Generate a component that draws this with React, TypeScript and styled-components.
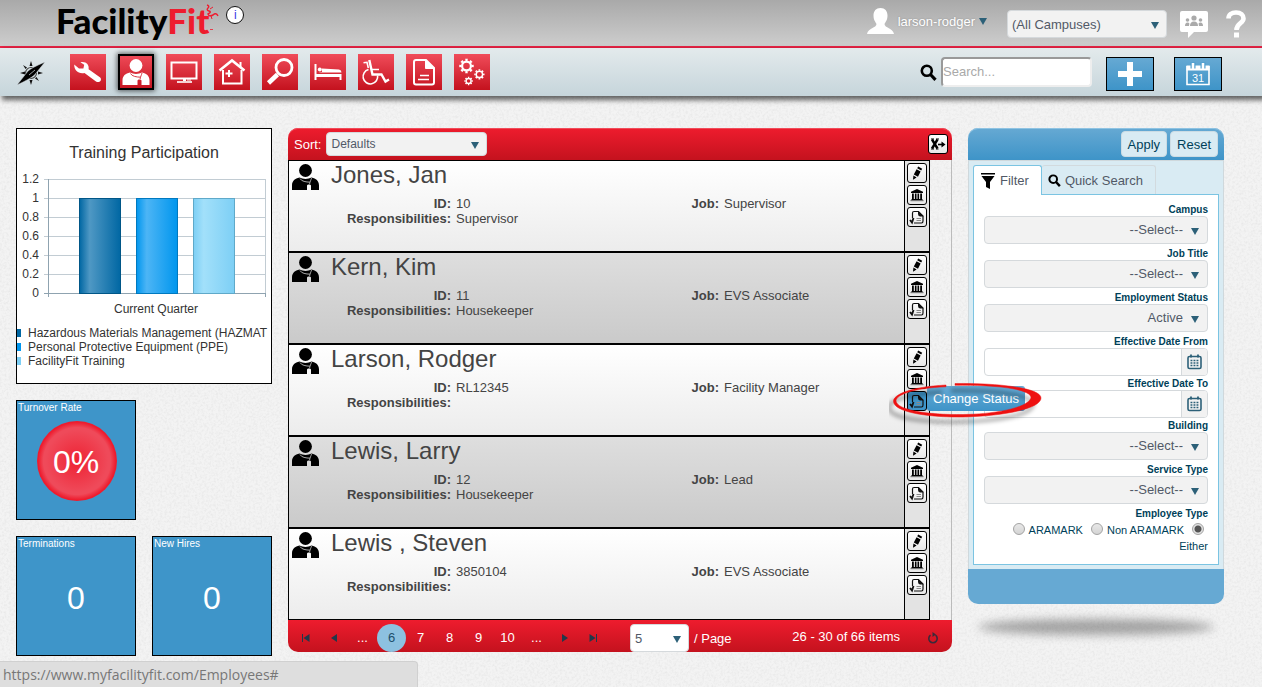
import React from "react";
import styled, { createGlobalStyle, css } from "styled-components";

const GlobalStyle = createGlobalStyle`
  *, *::before, *::after { box-sizing: border-box; }
  html { height: 100%; }
  body {
    margin: 0;
    min-height: 100%;
    background: #f3f3f3;
    color: #444;
    font: 13px/15px "Liberation Sans", Arial, sans-serif;
    overflow-x: hidden;
  }
  button, input, select { font: inherit; color: inherit; margin: 0; }
  button { padding: 0; cursor: pointer; }
  a { color: inherit; text-decoration: none; }
  svg { display: block; flex: none; }
`;

const blueFade = "linear-gradient(#66a9d3, #3e94c8)";
const redFade = "linear-gradient(#ee1c2e, #c4121e)";

/* ---------- page frame ---------- */

const Page = styled.div`
  min-height: 100vh;
  overflow: hidden;
  position: relative;
  isolation: isolate;
`;

const Texture = styled.svg`
  position: absolute;
  inset: 0;
  width: 100%;
  height: 100%;
  z-index: -1;
`;

const TopBar = styled.header`
  display: flex;
  align-items: center;
  height: 48px;
  padding: 2px 16px 0 56px;
  background: linear-gradient(#a9a9a9, #cdcdcd);
  border-bottom: 2px solid #ee2346;
`;

const Logo = styled.a`
  display: flex;
  font: 900 35px/40px Lato, sans-serif;
  color: #000;
  margin-bottom: 8px;
`;

const LogoAccent = styled.span`
  color: #ee1c2e;
`;

const Squiggle = styled.svg`
  margin: 4px 0 0 -4px;
`;

const InfoButton = styled.button`
  width: 18px;
  height: 18px;
  margin: 0 0 18px 7px;
  border: 1px solid #111;
  border-radius: 50%;
  background: #fff;
  color: #3a3ae6;
  font-size: 12px;
  line-height: 16px;
`;

const TopRight = styled.div`
  display: flex;
  align-items: center;
  margin-left: auto;
`;

const Account = styled.button`
  display: flex;
  align-items: center;
  gap: 4px;
  margin: 0 20px 6px 0;
  border: 0;
  background: none;
  color: #fff;
  text-shadow: 0 0 2px rgba(0, 0, 0, 0.25);
`;

const IconButton = styled.button<{ $gap: number }>`
  margin-left: ${(p) => p.$gap}px;
  border: 0;
  background: none;
`;

const Caret = styled.span`
  border: 4px solid transparent;
  border-top: 7px solid #2c6078;
  border-bottom: 0;
`;

const ToolBar = styled.nav`
  position: relative;
  display: flex;
  align-items: center;
  height: 48px;
  padding: 0 40px 0 16px;
  background: linear-gradient(#e3eaec, #c6d5db);
  box-shadow: 3px 3px 5px 1px rgba(0, 0, 0, 0.6);
`;

const ToolList = styled.div`
  display: flex;
  gap: 12px;
  margin: 0 auto 0 24px;
`;

const Tool = styled.a<{ $active?: boolean }>`
  width: 36px;
  height: 36px;
  background: linear-gradient(#f04c5a, #c4121e);
  ${(p) =>
    p.$active &&
    css`
      box-shadow: inset 0 0 0 2px #000, 0 0 5px 1px rgba(0, 0, 0, 0.6);
    `}
`;

const SearchBox = styled.label`
  display: flex;
  align-items: center;
  gap: 4px;
`;

const SearchInput = styled.input`
  width: 151px;
  height: 30px;
  padding: 0 0 2px;
  border: 2px solid #eee;
  border-top-color: #999;
  border-left-color: #999;
  border-radius: 4px;
  background: #fff;
  &::placeholder { color: #a9a9a9; }
`;

const BlueButton = styled.button<{ $gap: number }>`
  display: grid;
  place-items: center;
  width: 48px;
  height: 34px;
  margin: 3px 0 0 ${(p) => p.$gap}px;
  border: 1px solid #000;
  background: ${blueFade};
`;

const Columns = styled.main`
  display: grid;
  grid-template-columns: 256px minmax(0, 1fr) 256px;
  align-items: start;
  gap: 16px;
  padding: 32px 38px 31px 16px;
`;

/* ---------- select ---------- */

const SelectWrap = styled.span<{ $w?: number; $caret: number }>`
  display: block;
  position: relative;
  width: ${(p) => (p.$w ? p.$w + "px" : "100%")};
  &::after {
    content: "";
    position: absolute;
    right: ${(p) => p.$caret}px;
    top: 50%;
    margin-top: -2px;
    border: 4px solid transparent;
    border-top: 7px solid #2c6078;
    border-bottom: 0;
    pointer-events: none;
  }
`;

const SelectBase = styled.select<{ $h: number; $right?: boolean; $size: number; $plain?: boolean }>`
  display: block;
  appearance: none;
  width: 100%;
  height: ${(p) => p.$h}px;
  padding: 0 24px 0 4px;
  border: 1px solid #d5d9dc;
  border-radius: 4px;
  background: ${(p) => (p.$plain ? "#fff" : "#f2f2f2")};
  color: #515967;
  font-size: ${(p) => p.$size}px;
  text-align: ${(p) => (p.$right ? "right" : "left")};
  text-align-last: ${(p) => (p.$right ? "right" : "left")};
`;

type SelectProps = {
  id?: string;
  label?: string;
  value: string;
  h: number;
  w?: number;
  size?: number;
  right?: boolean;
  plain?: boolean;
};

const Select = ({ id, label, value, h, w, size = 13, right, plain }: SelectProps) => (
  <SelectWrap $w={w} $caret={right ? 9 : 8}>
    <SelectBase id={id} aria-label={label} $h={h} $size={size} $right={right} $plain={plain}>
      <option>{value}</option>
    </SelectBase>
  </SelectWrap>
);

/* ---------- left column ---------- */

const Dashboard = styled.section`
  display: grid;
  grid-template-columns: 1fr 1fr;
  gap: 16px;
`;

const ChartCard = styled.div`
  grid-column: 1 / -1;
  border: 1px solid #000;
  background: #fff;
`;

const Tile = styled.div`
  display: flex;
  flex-direction: column;
  height: 120px;
  border: 1px solid #000;
  background: #3e95c9;
  color: #fff;
`;

const TileGap = styled.div``;

const TileTitle = styled.h2`
  margin: 0;
  padding: 1px;
  font-size: 10px;
  line-height: 12px;
  font-weight: 400;
`;

const TileValue = styled.div<{ $round?: boolean }>`
  display: grid;
  place-items: center;
  align-self: center;
  width: 80px;
  height: 80px;
  margin: 6px 0 0 2px;
  padding: 2px 2px 0 0;
  border-radius: 50%;
  font-size: 32px;
  line-height: 36px;
  ${(p) =>
    p.$round &&
    css`
      background: radial-gradient(circle closest-side, #ee2233 0%, #ef4a5a 78%, #ef4a5a 84%, #ee1c2e 97%);
    `}
`;

/* ---------- employee list ---------- */

const ListPanel = styled.section`
  display: flex;
  flex-direction: column;
`;

const ListHeader = styled.div`
  display: flex;
  align-items: center;
  gap: 5px;
  height: 32px;
  padding: 0 4px 0 6px;
  border-radius: 10px 10px 0 0;
  background: ${redFade};
  box-shadow: inset 0 1px 0 #f04c5a;
  color: #fff;
`;

const Push = styled.span`
  margin-left: auto;
`;

const Rows = styled.ul`
  margin: 0;
  padding: 0 21px 0 0;
  list-style: none;
  border-right: 1px solid #bbb;
`;

const Row = styled.li`
  display: flex;
  height: 92px;
  border: 1px solid #000;
  background: linear-gradient(#fff, #ececec);
  &:nth-child(even) { background: linear-gradient(#dedede, #cacaca); }
`;

const RowIcon = styled.div`
  width: 42px;
  padding: 3px 0 0 3px;
`;

const RowBody = styled.div`
  flex: 1;
  min-width: 0;
`;

const RowName = styled.h3`
  margin: 0 0 7px;
  font-size: 24px;
  line-height: 28px;
  font-weight: 400;
`;

const Facts = styled.dl`
  display: grid;
  grid-template-columns: 120fr 148fr 120fr 185fr;
  margin: 0;
`;

const Term = styled.dt`
  text-align: right;
  font-weight: 700;
`;

const Detail = styled.dd`
  margin: 0;
  padding-left: 5px;
`;

const Actions = styled.div`
  display: flex;
  flex-direction: column;
  gap: 2px;
  width: 25px;
  padding: 2px 0 0 2px;
  border-left: 1px solid #000;
  background: #e3e3e3;
`;

const ActionSlot = styled.div`
  position: relative;
  width: 20px;
`;

const ActionButton = styled.button<{ $on?: boolean }>`
  display: grid;
  place-items: center;
  width: 20px;
  height: 20px;
  border: 1px solid #000;
  border-radius: 3px;
  background: ${(p) => (p.$on ? "#3e94c8" : "linear-gradient(#fff, #e8e8e8)")};
`;

const Tooltip = styled.span`
  position: absolute;
  left: 100%;
  top: -5px;
  z-index: 5;
  padding: 5px 6px;
  border-radius: 3px;
  background: ${blueFade};
  color: #fff;
  white-space: nowrap;
`;

const Circle = styled.svg`
  position: absolute;
  left: -18px;
  top: -13px;
  z-index: 6;
  pointer-events: none;
`;

const Pager = styled.div`
  display: flex;
  align-items: center;
  height: 32px;
  padding-left: 4px;
  border-radius: 0 0 10px 10px;
  background: ${redFade};
  color: #fff;
`;

const PagerButton = styled.button<{ $current?: boolean; $arrow?: boolean }>`
  display: grid;
  place-items: center;
  width: ${(p) => (p.$arrow ? 28 : 29)}px;
  height: 28px;
  margin-top: 3px;
  border: 0;
  border-radius: 50%;
  background: ${(p) => (p.$current ? "#8dc1e0" : "none")};
  color: ${(p) => (p.$current ? "#1d4f6b" : "#fff")};
`;

const PageSize = styled.label`
  display: flex;
  align-items: center;
  gap: 5px;
  margin: 4px 0 0 23px;
`;

const PageCount = styled.span`
  margin: 0 14px 0 auto;
`;

const RefreshButton = styled.button`
  display: grid;
  place-items: center;
  width: 38px;
  height: 32px;
  padding-top: 3px;
  border: 0;
  background: none;
`;

/* ---------- filter panel ---------- */

const FilterPanel = styled.form`
  position: relative;
`;

const FilterHeader = styled.div`
  display: flex;
  justify-content: flex-end;
  gap: 3px;
  height: 32px;
  padding: 3px 6px;
  border-radius: 10px 10px 0 0;
  background: ${blueFade};
  box-shadow: inset 0 1px 0 #8fc3e2;
`;

const PaleButton = styled.button`
  height: 26px;
  padding: 0 6px;
  border: 1px solid #ccdce4;
  border-radius: 4px;
  background: #d9ebf3;
  color: #003f59;
`;

const FilterBody = styled.div`
  padding: 4px;
  border: 1px solid #cfd8dc;
  border-bottom: 0;
  background: #d9ebf3;
`;

const Tabs = styled.div`
  display: flex;
  align-items: flex-start;
  height: 29px;
`;

const Tab = styled.button<{ $on?: boolean }>`
  display: flex;
  align-items: center;
  height: ${(p) => (p.$on ? 30 : 29)}px;
  gap: 4px;
  position: relative;
  padding: 0 12px 0 6px;
  border: 1px solid ${(p) => (p.$on ? "#7bc4e2" : "#d2dade")};
  border-bottom: 0;
  border-left-width: ${(p) => (p.$on ? "1px" : "0")};
  border-radius: 3px 3px 0 0;
  background: ${(p) => (p.$on ? "#fff" : "none")};
  color: #515967;
`;

const Fields = styled.div`
  padding: 9px 10px 10px;
  border: 1px solid #7bc4e2;
  background: #fff;
  color: #003f59;
  font-size: 10px;
  line-height: 12px;
`;

const Field = styled.div<{ $after: number }>`
  margin-bottom: ${(p) => p.$after}px;
`;

const FieldLabel = styled.label`
  display: block;
  text-align: right;
  font-weight: 700;
`;

const DateBox = styled.div`
  display: flex;
  height: 28px;
  border: 1px solid #d5d9dc;
  border-radius: 4px;
  background: #fff;
  overflow: hidden;
`;

const DateInput = styled.input`
  flex: 1;
  min-width: 0;
  border: 0;
  padding: 0 6px;
  background: none;
  font-size: 13px;
`;

const DateButton = styled.button`
  display: grid;
  place-items: center;
  width: 26px;
  border: 0;
  border-left: 1px solid #d5d9dc;
  background: #f2f2f2;
`;

const RadioSet = styled.fieldset`
  margin: 0;
  padding: 0;
  border: 0;
  min-width: 0;
  text-align: right;
  font-size: 11px;
  line-height: 16px;
`;

const RadioLegend = styled.legend`
  width: 100%;
  padding: 0;
  font-size: 10px;
  line-height: 12px;
  font-weight: 700;
`;

const Radio = styled.input`
  appearance: none;
  width: 12px;
  height: 12px;
  margin: 3px 4px 0 8px;
  vertical-align: -1px;
  border: 1px solid #a3a3a3;
  border-radius: 50%;
  background: linear-gradient(#e8e8e8, #d4d4d4);
  &:checked {
    background: radial-gradient(circle, #555 0 3px, #e2e2e2 4px);
  }
`;

const FilterFooter = styled.div`
  height: 35px;
  border-radius: 0 0 10px 10px;
  background: #66a9d3;
`;

const FloorShadow = styled.div`
  height: 16px;
  margin: 15px 10px 0;
  border-radius: 50%;
  background: rgba(0, 0, 0, 0.32);
  filter: blur(5px);
`;

const StatusBar = styled.div`
  position: fixed;
  left: 0;
  bottom: 0;
  z-index: 10;
  width: 33.1%;
  height: 26px;
  padding: 4px 3px;
  border-top: 1px solid #d0d0d0;
  border-right: 1px solid #d0d0d0;
  border-top-right-radius: 4px;
  background: #dedede;
  color: #777;
  font: 14px/18px "Open Sans", sans-serif;
  white-space: nowrap;
`;

/* ---------- icons ---------- */

const PersonShape = ({ line }: { line: string }) => (
  <>
    <circle cx="13.5" cy="6.5" r="6.4" />
    <path d="M0 26V21.5C0 17 3 14.5 7.5 13.6C11 15.4 16 15.4 19.5 13.6C24 14.5 27 17 27 21.5V26H19V21.5C19 20 15 20 15 21.5V26Z" />
    <path d="M8 14.5C9.5 17.5 14 18 18 18.2M19.5 14C19 16 18 17.5 17.6 20" fill="none" stroke={line} strokeWidth="0.9" />
  </>
);

const PersonIcon = () => (
  <svg width="27" height="26" viewBox="0 0 27 26" fill="#000">
    <PersonShape line="#bbb" />
  </svg>
);

const Gear = ({ x, y, r, n, w }: { x: number; y: number; r: number; n: number; w: number }) => (
  <>
    <circle cx={x} cy={y} r={r} fill="none" stroke="#fff" strokeWidth={w} />
    <circle cx={x} cy={y} r={r + w * 0.8} fill="none" stroke="#fff" strokeWidth={w} pathLength={n * 2} strokeDasharray="1 1" strokeDashoffset="0.5" />
  </>
);

const toolIcons: { name: string; art: React.ReactNode }[] = [
  {
    name: "Maintenance",
    art: <path fill="#fff" d="M4.2 10.5C4 16 8.5 20.4 14.5 19L26 27.6C29.4 29.4 32.4 26 30.2 23.4L18.6 15.2C19.4 10.4 15.8 7 10.4 8.2L14.2 10.8L13.4 14.4L9 14.6Z" />,
  },
  {
    name: "Employees",
    art: (
      <g fill="#fff" transform="translate(4.5 5)">
        <PersonShape line="#d42231" />
      </g>
    ),
  },
  {
    name: "Assets",
    art: (
      <g fill="none" stroke="#fff">
        <rect x="5.5" y="8.5" width="25" height="16" strokeWidth="2" />
        <path d="M17 26h3" strokeWidth="2" />
        <path d="M11 28h15" strokeWidth="1.6" />
        <path d="M21 26h4" strokeWidth="1" />
      </g>
    ),
  },
  {
    name: "Buildings",
    art: (
      <g fill="none" stroke="#fff" strokeWidth="2">
        <path d="M9 16V29.5H27.5V16" />
        <path d="M5.500 16.500L18 6.500L30.500 16.500" strokeWidth="2.600" />
        <path d="M26.500 8v5M15 16v7M11.500 19.500h7" strokeWidth="2" />
      </g>
    ),
  },
  {
    name: "Inspections",
    art: (
      <g fill="none" stroke="#fff">
        <circle cx="22" cy="13.500" r="8" strokeWidth="2.800" />
        <path d="M15.500 20.500L6.500 29" strokeWidth="4.500" />
      </g>
    ),
  },
  {
    name: "Beds",
    art: (
      <g fill="#fff">
        <path d="M4.500 10h2v10h25v6h-2v-3H6.500v3h-2z" />
        <circle cx="9.800" cy="15.500" r="2" />
        <path d="M12 14.500L29 15.500Q31.500 16 31.500 18.500H8.500Q9 18 12 18Z" />
      </g>
    ),
  },
  {
    name: "Patients",
    art: (
      <g fill="none" stroke="#fff" strokeWidth="1.600">
        <path d="M10.500 15.600A7.300 7.300 0 1 0 19.600 21.500" />
        <path d="M11.300 6L14.500 20.500H23.500L27.500 27.500L31 25.500" strokeWidth="2.400" />
        <path d="M5.500 8.800L9 8.300L10.300 14M14 15.500H21" />
      </g>
    ),
  },
  {
    name: "Documents",
    art: (
      <g fill="none" stroke="#fff" strokeWidth="2">
        <path d="M10 6H20L28 14V28.500Q28 30.500 26 30.500H10Q8 30.500 8 28.500V8Q8 6 10 6Z" />
        <path d="M19.500 5.500V14.500H28Z" fill="#fff" strokeWidth="1" />
        <path d="M14 21.500h9M12 25.500h11" strokeWidth="1.600" />
      </g>
    ),
  },
  {
    name: "Settings",
    art: (
      <>
        <Gear x={12.5} y={12} r={4.4} n={8} w={2.2} />
        <Gear x={25.4} y={20.4} r={3.2} n={8} w={1.5} />
        <Gear x={14.6} y={27} r={2.5} n={8} w={1.4} />
      </>
    ),
  },
];

const Compass = () => (
  <svg width="30" height="28" viewBox="0 0 30 28">
    <circle cx="15" cy="15" r="5.500" fill="none" stroke="#444" strokeWidth="1.200" />
    <path
      fill="#111"
      d="M15 3l1.500 5h-3zM15 27l1.500-5h-3zM4 15l5-1.500v3zM27 15l-5-1.500v3zM7 7l4 2.500-1.500 1.500zM23 23l-4-2.500 1.500-1.500z"
    />
    <path fill="#000" stroke="#dde5e8" strokeWidth="0.500" d="M1 27L12 13Q16 9.500 29 4L18.500 17Q14 21 1 27Z" />
    <path stroke="#dde5e8" strokeWidth="0.700" d="M13 17L19 12" />
  </svg>
);

const Magnifier = ({ size }: { size: number }) => (
  <svg width={size} height={size} viewBox="0 0 17 17" fill="none" stroke="#000">
    <circle cx="6.800" cy="6.800" r="5" strokeWidth="2.600" />
    <path d="M10.500 10.500L15.500 15.800" strokeWidth="3.200" />
  </svg>
);

const Pencil = () => (
  <svg width="14" height="14" viewBox="0 0 14 14">
    <path d="M8.200 0.500L12.200 2.800L11.200 4.500L7.200 2.300ZM6.600 3.200L10.600 5.500L8 10.800L3.800 8.500ZM3.400 9.400L6.600 11.400L3 13.800Z" />
  </svg>
);

const Bank = () => (
  <svg width="14" height="14" viewBox="0 0 14 14">
    <path d="M7 1L13 3.800V5H1V3.800ZM2 5.500h1.800V11H2zM4.900 5.500h1.600V11H4.900zM7.500 5.500h1.600V11H7.500zM10.200 5.500H12V11h-1.800zM1.500 11h11v1h-11z" />
    <path d="M0.500 12h13v1.200h-13z" fill="#777" />
  </svg>
);

const StatusDoc = () => (
  <svg width="16" height="16" viewBox="0 0 16 16" fill="none" stroke="#111">
    <path d="M3.500 9V4Q3.500 2.500 5 2.500H9.500L14 7V12Q14 14 12.500 14H5" strokeWidth="1.200" />
    <path d="M9 2L14.500 7.500H11Q9 7 9 5Z" fill="#111" stroke="none" />
    <path d="M7.500 9.500h4.500M7.500 11.500h4.500" stroke="#888" />
    <path d="M1 11L3 13.500L4.500 9" strokeWidth="1.900" />
  </svg>
);

const ExportIcon = () => (
  <svg width="16" height="14" viewBox="0 0 16 14">
    <path d="M2 2.500L7.500 11.500M7.500 2.500L2 11.500" stroke="#000" strokeWidth="2.400" />
    <path d="M1 2h3M6 2h3M1 12h3M6 12h2.500" stroke="#000" strokeWidth="1.200" />
    <path d="M8 7.500h5" stroke="#000" strokeWidth="1.600" />
    <path d="M11.500 4.500L15.500 7.500L11.500 10.500Z" />
  </svg>
);

const CalendarGrid = () => (
  <svg width="15" height="16" viewBox="0 0 15 16" fill="none" stroke="#2c6078">
    <rect x="1" y="2.500" width="13" height="12" rx="1.500" strokeWidth="1.600" />
    <path d="M4 0.500v3M11 0.500v3" strokeWidth="1.800" />
    <path d="M3.500 6.500h8.500M3.500 9h8.500M3.500 11.500h8.500" strokeWidth="1.700" strokeDasharray="1.900 1.100" />
  </svg>
);

const arrowPaths: Record<string, string> = {
  First: "M1 1h1v8H1zM8.500 1v8L2.500 5z",
  Previous: "M8 1v8L2 5z",
  Next: "M2 1v8l6-4z",
  Last: "M1.500 1v8l6-4zM8 1h1v8H8z",
};

const PagerArrow = ({ kind }: { kind: string }) => (
  <PagerButton type="button" $arrow aria-label={kind + " page"}>
    <svg width="10" height="10" viewBox="0 0 10 10" fill="#22384a">
      <path d={arrowPaths[kind]} />
    </svg>
  </PagerButton>
);

/* ---------- chart ---------- */

const bars = [
  { x: 62, dark: "#0067a3", light: "#4f98c4", edge: "#005687", label: "Hazardous Materials Management (HAZMAT" },
  { x: 119, dark: "#0096ee", light: "#4db5f5", edge: "#0079bf", label: "Personal Protective Equipment (PPE)" },
  { x: 176, dark: "#7dcff5", light: "#a2e0fa", edge: "#5fa9c9", label: "FacilityFit Training" },
];

const ticks = ["1.2", "1", "0.8", "0.6", "0.4", "0.2", "0"];

const Chart = () => (
  <svg width="100%" viewBox="0 0 254 254" fontSize="12" fill="#333" role="img" aria-label="Training Participation">
    <defs>
      {bars.map((b, i) => (
        <linearGradient key={i} id={"bar" + i}>
          <stop offset="0" stopColor={b.dark} />
          <stop offset="0.250" stopColor={b.light} />
          <stop offset="1" stopColor={b.dark} />
        </linearGradient>
      ))}
    </defs>
    <text x="127" y="29" fontSize="16" textAnchor="middle">Training Participation</text>
    {ticks.map((t, i) => (
      <g key={t}>
        <path d={`M27 ${50.5 + i * 19}H248.500`} stroke={i === 6 ? "#8fa3b0" : "#c2ccd3"} />
        <text x="22" y={54 + i * 19} textAnchor="end">{t}</text>
      </g>
    ))}
    <path d="M31.500 50V168M248.500 164V168" stroke="#8fa3b0" />
    <path d="M248.500 50V164" stroke="#c2ccd3" />
    {bars.map((b, i) => (
      <g key={b.x}>
        <rect x={b.x + 0.5} y="69.500" width="41" height="95" fill={`url(#bar${i})`} stroke={b.edge} />
        <rect x="0" y={200 + i * 14} width="4" height="8" fill={b.dark} />
        <text x="11" y={208 + i * 14}>{b.label}</text>
      </g>
    ))}
    <text x="139" y="184" textAnchor="middle">Current Quarter</text>
  </svg>
);

/* ---------- data ---------- */

const employees = [
  { name: "Jones, Jan", id: "10", job: "Supervisor", duty: "Supervisor" },
  { name: "Kern, Kim", id: "11", job: "EVS Associate", duty: "Housekeeper" },
  { name: "Larson, Rodger", id: "RL12345", job: "Facility Manager", duty: "", open: true },
  { name: "Lewis, Larry", id: "12", job: "Lead", duty: "Housekeeper" },
  { name: "Lewis , Steven", id: "3850104", job: "EVS Associate", duty: "" },
];

const filters = [
  { id: "campus", label: "Campus", value: "--Select--" },
  { id: "job-title", label: "Job Title", value: "--Select--" },
  { id: "employment", label: "Employment Status", value: "Active" },
  { id: "date-from", label: "Effective Date From" },
  { id: "date-to", label: "Effective Date To" },
  { id: "building", label: "Building", value: "--Select--" },
  { id: "service", label: "Service Type", value: "--Select--" },
];

const HandCircle = () => (
  <Circle width="160" height="54" viewBox="0 0 160 54">
    <defs>
      <filter id="soft" x="-10%" y="-30%" width="120%" height="160%">
        <feGaussianBlur stdDeviation="2" />
      </filter>
    </defs>
    <path
      d="M57 8C20 10 3 17 4 24C5 34 38 38.500 74 38C118 37 148 30 148 20C148 11 110 6 66 6.500"
      transform="translate(-4 6)"
      fill="none"
      stroke="#000"
      strokeOpacity="0.400"
      strokeWidth="3"
      filter="url(#soft)"
    />
    <path
      fill="#ee1111"
      stroke="#ee1111"
      strokeWidth="0.500"
      d="M57 7C20 9 4 17 4.500 23.500C5 34 38 39.500 74 39C118 38 152 30 152 20C152 10 110 5 66 5.500V7.300C108 6.800 140 11 142 19C142 28 112 36 74 36.500C38 37 8 32 7 23C7 17 24 10 57 8.800Z"
    />
  </Circle>
);

export default function App() {
  return (
    <Page>
      <GlobalStyle />
      <Texture aria-hidden="true">
        <filter id="grain">
          <feTurbulence type="fractalNoise" baseFrequency="0.430" numOctaves="3" seed="4" />
          <feColorMatrix values="0 0 0 0 0.500  0 0 0 0 0.500  0 0 0 0 0.500  0.400 0 0 0 -0.160" />
        </filter>
        <rect width="100%" height="100%" filter="url(#grain)" />
      </Texture>

      <TopBar>
        <Logo href="#" aria-label="FacilityFit">
          Facility<LogoAccent>Fit</LogoAccent>
          <Squiggle width="14" height="30" viewBox="0 0 14 30" fill="none" stroke="#ee1c2e">
            <path d="M2 1Q5 2 3 4T4 7T3 10Q4 13 8 11Q11 8 13 12" strokeWidth="1.400" />
            <path d="M5 5l3-2M6 12l1 3" />
            <path d="M5 25.500h3" strokeWidth="0.800" />
          </Squiggle>
        </Logo>
        <InfoButton type="button">i</InfoButton>
        <TopRight>
          <Account type="button">
            <svg width="27" height="26" viewBox="0 0 27 26" fill="#fff">
              <path d="M13.500 0C18 0 20.500 3 20.500 7.500C20.500 12 18.500 14 17.500 16C17.500 20 26 20 27 26H0C1 20 9.500 20 9.500 16C8.500 14 6.500 12 6.500 7.500C6.500 3 9 0 13.500 0Z" />
            </svg>
            larson-rodger
            <Caret />
          </Account>
          <Select label="Campus" value="(All Campuses)" h={28} w={160} />
          <IconButton type="button" $gap={13} aria-label="Community">
            <svg width="28" height="27" viewBox="0 0 28 27">
              <path fill="#fff" d="M2 0H26Q28 0 28 2V19Q28 21 26 21H14L8 27V21H2Q0 21 0 19V2Q0 0 2 0Z" />
              <g fill="#aaa">
                <circle cx="14" cy="7" r="2.600" />
                <circle cx="7.500" cy="9" r="1.800" />
                <circle cx="20.500" cy="9" r="1.800" />
                <path d="M10 15Q10 10.500 14 10.500T18 15ZM5 15Q5 11.500 7.500 11.500Q9 11.500 9.400 12.500L9 15ZM23 15Q23 11.500 20.500 11.500Q19 11.500 18.600 12.500L19 15Z" />
              </g>
            </svg>
          </IconButton>
          <IconButton type="button" $gap={18} aria-label="Help">
            <svg width="20" height="28" viewBox="0 0 20 28" fill="none" stroke="#fff" strokeWidth="4.600">
              <path d="M2.500 8.500C2.500 4.500 5.500 2.500 10 2.500C15 2.500 17.500 5 17.500 8.500C17.500 13.500 10.500 13 10.500 20" />
              <path d="M10.500 22.500v5" strokeWidth="5" />
            </svg>
          </IconButton>
        </TopRight>
      </TopBar>

      <ToolBar>
        <Compass />
        <ToolList>
          {toolIcons.map((t) => (
            <Tool key={t.name} href="#" aria-label={t.name} $active={t.name === "Employees"}>
              <svg width="36" height="36" viewBox="0 0 36 36">{t.art}</svg>
            </Tool>
          ))}
        </ToolList>
        <SearchBox aria-label="Search">
          <Magnifier size={17} />
          <SearchInput type="search" placeholder="Search..." />
        </SearchBox>
        <BlueButton type="button" $gap={14} aria-label="Add">
          <svg width="24" height="24" viewBox="0 0 24 24" fill="#fff">
            <path d="M9 0h6v9h9v6h-9v9H9v-9H0V9h9z" />
          </svg>
        </BlueButton>
        <BlueButton type="button" $gap={20} aria-label="Calendar">
          <svg width="24" height="24" viewBox="0 0 24 24" fill="none" stroke="#fff">
            <path d="M1 4V22.500H23V4" strokeWidth="1.600" />
            <path d="M0.500 6h23" strokeWidth="5" />
            <path d="M7 0.500v6M17 0.500v6" stroke="#4d9dce" strokeWidth="5" />
            <path d="M7 1v6M17 1v6" strokeWidth="2.600" />
            <text x="12" y="20" fontSize="11" textAnchor="middle" fill="#fff" stroke="none">31</text>
          </svg>
        </BlueButton>
      </ToolBar>

      <Columns>
        <Dashboard>
          <ChartCard>
            <Chart />
          </ChartCard>
          <Tile>
            <TileTitle>Turnover Rate</TileTitle>
            <TileValue $round>0%</TileValue>
          </Tile>
          <TileGap />
          <Tile>
            <TileTitle>Terminations</TileTitle>
            <TileValue>0</TileValue>
          </Tile>
          <Tile>
            <TileTitle>New Hires</TileTitle>
            <TileValue>0</TileValue>
          </Tile>
        </Dashboard>

        <ListPanel>
          <ListHeader>
            <label htmlFor="sort">Sort:</label>
            <Select id="sort" value="Defaults" h={24} w={161} size={12} />
            <Push>
              <ActionButton type="button" aria-label="Export">
                <ExportIcon />
              </ActionButton>
            </Push>
          </ListHeader>
          <Rows>
            {employees.map((e) => (
              <Row key={e.name}>
                <RowIcon>
                  <PersonIcon />
                </RowIcon>
                <RowBody>
                  <RowName>{e.name}</RowName>
                  <Facts>
                    <Term>ID:</Term>
                    <Detail>{e.id}</Detail>
                    <Term>Job:</Term>
                    <Detail>{e.job}</Detail>
                    <Term>Responsibilities:</Term>
                    <Detail>{e.duty}</Detail>
                  </Facts>
                </RowBody>
                <Actions>
                  <ActionButton type="button" aria-label="Edit">
                    <Pencil />
                  </ActionButton>
                  <ActionButton type="button" aria-label="Building">
                    <Bank />
                  </ActionButton>
                  <ActionSlot>
                    <ActionButton type="button" aria-label="Change Status" $on={e.open}>
                      <StatusDoc />
                    </ActionButton>
                    {e.open && (
                      <>
                        <Tooltip role="tooltip">Change Status</Tooltip>
                        <HandCircle />
                      </>
                    )}
                  </ActionSlot>
                </Actions>
              </Row>
            ))}
          </Rows>
          <Pager>
            <PagerArrow kind="First" />
            <PagerArrow kind="Previous" />
            {["...", "6", "7", "8", "9", "10", "... "].map((p) => (
              <PagerButton key={p} type="button" $current={p === "6"}>
                {p}
              </PagerButton>
            ))}
            <PagerArrow kind="Next" />
            <PagerArrow kind="Last" />
            <PageSize>
              <Select value="5" h={28} w={59} plain />/ Page
            </PageSize>
            <PageCount>26 - 30 of 66 items</PageCount>
            <RefreshButton type="button" aria-label="Refresh">
              <svg width="12" height="12" viewBox="0 0 12 12" fill="none" stroke="#3b2a3a">
                <path d="M3.500 3.200A4.200 4.200 0 1 0 8.500 3.200" strokeWidth="1.600" />
                <path d="M5.500 0L9 2.500L5.500 5Z" fill="#3b2a3a" stroke="none" />
              </svg>
            </RefreshButton>
          </Pager>
        </ListPanel>

        <FilterPanel>
          <FilterHeader>
            <PaleButton type="button">Apply</PaleButton>
            <PaleButton type="reset">Reset</PaleButton>
          </FilterHeader>
          <FilterBody>
            <Tabs>
              <Tab type="button" $on>
                <svg width="16" height="16" viewBox="0 0 16 16">
                  <path d="M1 0h14v1.500H1zM1.500 3h13L10 9v7l-4-2V9z" />
                </svg>
                Filter
              </Tab>
              <Tab type="button">
                <Magnifier size={13} />
                <span>Quick Search</span>
              </Tab>
            </Tabs>
            <Fields>
              {filters.map((f) => (
                <Field key={f.id} $after={f.value ? 4 : 2}>
                  <FieldLabel htmlFor={f.id}>{f.label}</FieldLabel>
                  {f.value ? (
                    <Select id={f.id} value={f.value} h={28} right />
                  ) : (
                    <DateBox>
                      <DateInput id={f.id} type="text" />
                      <DateButton type="button" aria-label={"Pick " + f.label}>
                        <CalendarGrid />
                      </DateButton>
                    </DateBox>
                  )}
                </Field>
              ))}
              <RadioSet>
                <RadioLegend>Employee Type</RadioLegend>
                <label>
                  <Radio type="radio" name="type" />
                  ARAMARK
                </label>
                <label>
                  <Radio type="radio" name="type" />
                  Non ARAMARK
                </label>
                <label>
                  <Radio type="radio" name="type" defaultChecked />
                  <br />
                  Either
                </label>
              </RadioSet>
            </Fields>
          </FilterBody>
          <FilterFooter />
          <FloorShadow />
        </FilterPanel>
      </Columns>

      <StatusBar>https://www.myfacilityfit.com/Employees#</StatusBar>
    </Page>
  );
}
